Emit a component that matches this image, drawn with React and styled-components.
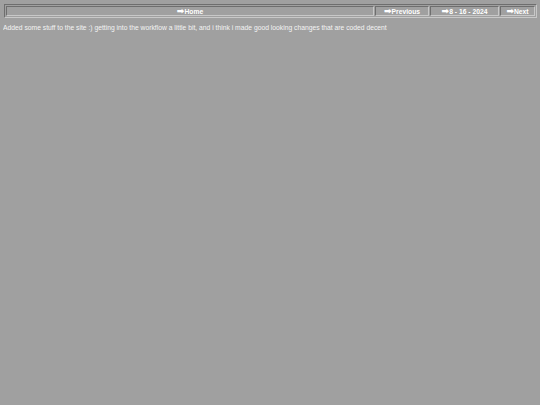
import React from "react";
import styled, { createGlobalStyle } from "styled-components";

const Global = createGlobalStyle`
  html, body {
    background: #a0a0a0;
  }
  body {
    margin: 4px 3px;
    color: #f4f4f4;
    font-family: "Liberation Sans", Arial, sans-serif;
    font-size: 6.75px;
  }
  *, *::before, *::after {
    box-sizing: border-box;
  }
`;

const Bar = styled.nav`
  display: flex;
  gap: 1px;
  padding: 1px;
  margin: 0 0 0 1px;
  border: 1px solid;
  border-color: #6e6e6e #c8c8c8 #c8c8c8 #6e6e6e;
  height: 14px;
`;

const Cell = styled.a`
  flex: ${(p) => (p.$grow ? 1 : "none")};
  width: ${(p) => (p.$w ? `${p.$w}px` : "auto")};
  display: flex;
  align-items: center;
  justify-content: center;
  border: 1px solid;
  border-color: #6e6e6e #c8c8c8 #c8c8c8 #6e6e6e;
  color: #ffffff;
  font-weight: bold;
  font-size: 6.75px;
  text-decoration: none;
  white-space: nowrap;
`;

const Arrow = styled.span`
  font-family: "DejaVu Sans", sans-serif;
  font-size: 9px;
  line-height: 1;
`;

const Note = styled.p`
  margin: 6px 0 0;
  line-height: 8px;
`;

function Item({ children, ...rest }) {
  return (
    <Cell {...rest}>
      <Arrow>➡</Arrow>
      {children}
    </Cell>
  );
}

export default function App() {
  return (
    <>
      <Global />
      <Bar>
        <Item $grow>Home</Item>
        <Item $w={54}>Previous</Item>
        <Item $w={69}>8 - 16 - 2024</Item>
        <Item $w={35}>Next</Item>
      </Bar>
      <Note>
        Added some stuff to the site :) getting into the workflow a little bit,
        and i think i made good looking changes that are coded decent
      </Note>
    </>
  );
}
